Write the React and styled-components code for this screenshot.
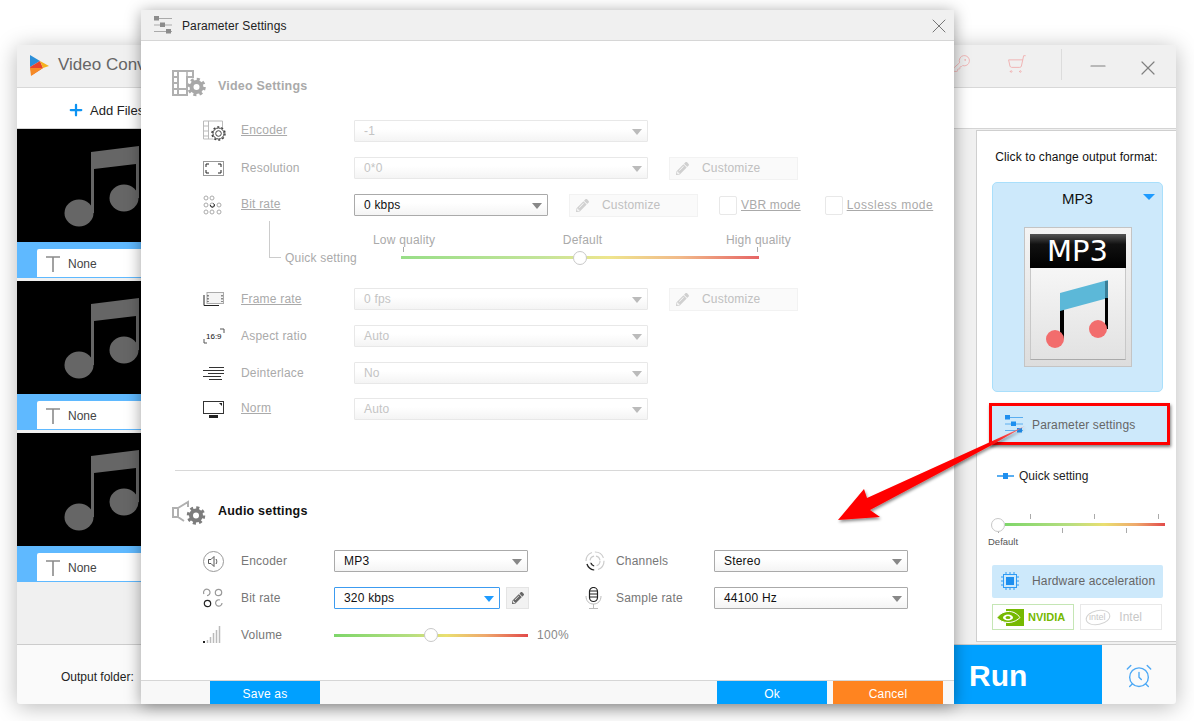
import styled, { createGlobalStyle } from "styled-components";
import { AlarmClock, KeyRound, ShoppingCart, X, Minus, Plus } from "lucide-react";
import { FaPencilAlt } from "react-icons/fa";

const GlobalStyle = createGlobalStyle`
  html, body {
    margin: 0;
    padding: 0;
    background: #fff;
  }
  * {
    box-sizing: border-box;
  }
  body {
    font-family: "Liberation Sans", Arial, sans-serif;
    font-size: 12px;
  }
`;

const Desktop = styled.div`
  position: relative;
  width: 1194px;
  height: 721px;
  overflow: hidden;
  background: #fff;
`;

const MainWindow = styled.div`
  position: absolute;
  left: 17px;
  top: 45px;
  width: 1159px;
  height: 659px;
  display: flex;
  flex-direction: column;
  border-radius: 4px;
  overflow: hidden;
  background: #f0f0f0;
`;

const MainShadow = styled.div`
  position: absolute;
  left: 17px;
  top: 45px;
  width: 1159px;
  height: 659px;
  border-radius: 4px;
  box-shadow: 0 3px 22px rgba(0, 0, 0, 0.28);
`;

const TitleBar = styled.div`
  height: 43px;
  flex: none;
  display: flex;
  align-items: center;
  padding-left: 12px;
  background: #f0f0f0;
  border-bottom: 1px solid #d8d8d8;
`;

const AppName = styled.div`
  margin: 0 0 2px 9px;
  font-size: 17px;
  color: #666;
`;

const TitleTools = styled.div`
  margin-left: auto;
  display: flex;
  align-items: center;
  color: #f0b4b4;
`;

const ToolIcon = styled.div`
  display: flex;
  margin: -5px ${(p) => p.$mr || 0}px 0 0;
  transform: ${(p) => (p.$flip ? "scaleX(-1)" : "none")};
`;

const TitleSep = styled.div`
  width: 1px;
  height: 31px;
  margin: -4px 24px 0 34px;
  background: #dcdcdc;
`;

const WinButton = styled.div`
  display: flex;
  color: #808080;
  margin: ${(p) => p.$mt || 0}px ${(p) => p.$mr || 0}px 0 0;
`;

const Toolbar = styled.div`
  height: 41px;
  flex: none;
  display: flex;
  align-items: center;
  padding: 4px 0 0 50px;
  gap: 5px;
  background: #fff;
  border-bottom: 1px solid #d4d4d4;
  font-size: 13px;
  color: #222;
`;

const Content = styled.div`
  flex: 1;
  min-height: 0;
  display: flex;
  background: #f0f0f0;
`;

const FileList = styled.div`
  flex: 1;
  display: flex;
  flex-direction: column;
`;

const FileItem = styled.div`
  width: 800px;
  margin-bottom: 3px;
`;

const Thumb = styled.div`
  height: 113px;
  padding: 17px 0 0 47px;
  background: #000;
`;

const Strip = styled.div`
  height: 36px;
  padding: 7px 0 1px 20px;
  background: #5fb9ff;
`;

const NameBox = styled.div`
  height: 28px;
  display: flex;
  align-items: center;
  gap: 8px;
  padding: 1px 0 0 9px;
  background: #fff;
  border-radius: 2px 0 0 0;
  color: #444;
`;

const SidePanel = styled.div`
  width: 200px;
  flex: none;
  margin: 1px 0 2px;
  display: flex;
  flex-direction: column;
  background: #fff;
  border: 1px solid #cfcfcf;
  border-width: 1px 0 1px 1px;
`;

const SideHint = styled.div`
  margin-top: 19px;
  text-align: center;
  color: #111;
  letter-spacing: 0.1px;
  line-height: 14px;
`;

const FormatCard = styled.div`
  position: relative;
  margin: 18px 13px 0 15px;
  height: 210px;
  display: flex;
  flex-direction: column;
  align-items: center;
  background: #cde9fb;
  border: 1px solid #a9dffb;
  border-radius: 5px;
`;

const FormatName = styled.div`
  margin-top: 7px;
  height: 18px;
  font-size: 15px;
  color: #111;
`;

const FormatCaret = styled.div`
  position: absolute;
  right: 7px;
  top: 11px;
  border: 6px solid transparent;
  border-top: 6px solid #1e9bff;
  border-bottom: 0;
`;

const DocIcon = styled.div`
  margin-top: 19px;
  width: 108px;
  height: 140px;
  padding: 6px 5px;
  background: linear-gradient(#f4f4f4, #ddd);
  border: 1px solid #c4c4c4;
`;

const DocHead = styled.div`
  height: 34px;
  display: flex;
  align-items: center;
  justify-content: center;
  background: linear-gradient(#555 0, #111 30%, #000 100%);
  color: #fff;
  font-family: "DejaVu Sans", sans-serif;
  font-size: 29px;
`;

const DocBody = styled.div`
  height: 92px;
  padding: 11px 0 0 15px;
  background: linear-gradient(#f6f6f6, #e2e2e2);
  border: 1px solid #c8c8c8;
  border-width: 0 1px 1px;
  border-bottom-color: #aaa;
`;

const ParamRow = styled.div`
  margin: 11px 6px 0 12px;
  height: 42px;
  display: flex;
  align-items: center;
  padding: 0 0 0 13px;
  gap: 9px;
  background: #cde9fb;
  border: 3px solid #f00;
  box-shadow: 1px 2px 3px rgba(0, 0, 0, 0.5);
  color: #666;
`;

const ParamText = styled.div`
  margin-top: 1px;
  letter-spacing: 0.15px;
`;

const QuickRow = styled.div`
  margin: 24px 0 0 20px;
  display: flex;
  align-items: center;
  gap: 5px;
  color: #222;
`;

const SideSlider = styled.div`
  position: relative;
  margin: 40px 11px 0 28px;
  height: 3px;
  background: linear-gradient(90deg, #7ed66a, #b6de80 40%, #eadf70 62%, #eea86c 82%, #e24a4a);
`;

const Tick = styled.div`
  position: absolute;
  left: ${(p) => p.$x}px;
  top: ${(p) => (p.$low ? 5 : -9)}px;
  width: 1px;
  height: 5px;
  background: #aaa;
`;

const Knob = styled.div`
  position: absolute;
  left: ${(p) => p.$left};
  top: 50%;
  width: 14px;
  height: 14px;
  margin: -7px 0 0 -7px;
  border-radius: 50%;
  background: #fff;
  border: 1px solid #c8c8c8;
`;

const SideDefault = styled.div`
  margin: 10px 0 0 11px;
  font-size: 9.5px;
  color: #555;
  line-height: 11px;
`;

const HwRow = styled.div`
  margin: 18px 13px 0 15px;
  height: 33px;
  display: flex;
  align-items: center;
  gap: 13px;
  padding: 0 0 1px 9px;
  background: #cde9fb;
  border-radius: 2px;
  color: #666;
  letter-spacing: 0.15px;
`;

const GpuRow = styled.div`
  margin: 6px 14px 0 15px;
  display: flex;
  gap: 6px;
`;

const GpuButton = styled.div`
  flex: 1;
  height: 26px;
  display: flex;
  align-items: center;
  gap: ${(p) => (p.$on ? 4 : 5)}px;
  padding-left: 4px;
  border: 1px solid ${(p) => (p.$on ? "#c5e6b5" : "#e8e8e8")};
  color: ${(p) => (p.$on ? "#76b900" : "#c8c8c8")};
  font-size: ${(p) => (p.$on ? 11 : 12)}px;
  font-weight: ${(p) => (p.$on ? "bold" : "normal")};
`;

const BottomBar = styled.div`
  height: 60px;
  flex: none;
  display: flex;
  align-items: stretch;
  padding-left: 44px;
  background: #fafafa;
  border-top: 1px solid #ccc;
`;

const OutputLabel = styled.div`
  margin-top: 25px;
  color: #222;
`;

const RunButton = styled.div`
  margin-left: auto;
  width: 200px;
  padding: 2px 0 0 67px;
  display: flex;
  align-items: center;
  background: #00a0ff;
  color: #fff;
  font-size: 30px;
  font-weight: bold;
`;

const AlarmSlot = styled.div`
  width: 74px;
  padding-top: 2px;
  display: flex;
  align-items: center;
  justify-content: center;
  color: #4ea9f5;
`;

const Dialog = styled.div`
  position: absolute;
  left: 141px;
  top: 10px;
  width: 813px;
  height: 694px;
  display: flex;
  flex-direction: column;
  background: #fff;
  border-radius: 3px;
  box-shadow: 0 2px 16px rgba(0, 0, 0, 0.38);
`;

const DialogTitle = styled.div`
  height: 31px;
  flex: none;
  display: flex;
  align-items: center;
  padding: 0 3px 0 13px;
  gap: 10px;
  background: #f0f0f0;
  border-bottom: 1px solid #d6d6d6;
  color: #222;
  letter-spacing: 0.1px;
`;

const DialogHeading = styled.div`
  margin-top: 2px;
`;

const DialogClose = styled.div`
  margin: 1px 0 0 auto;
  display: flex;
  color: #777;
`;

const DialogBody = styled.div`
  flex: 1;
  min-height: 0;
  padding-top: 29px;
`;

const SectionHead = styled.div`
  height: 26px;
  display: flex;
  align-items: flex-start;
  gap: 11px;
  padding-left: 31px;
  font-weight: bold;
  font-size: 12.5px;
  line-height: 14px;
  letter-spacing: 0.2px;
  color: ${(p) => (p.$off ? "#aaa" : "#111")};
`;

const SectionText = styled.div`
  margin-top: ${(p) => p.$mt}px;
`;

const Rows = styled.div`
  margin-top: 24px;
  padding-left: 62px;
  display: flex;
  flex-direction: column;
  gap: 15px;
`;

const Row = styled.div`
  height: 22px;
  display: flex;
  align-items: center;
  margin-top: ${(p) => p.$mt || 0}px;
`;

const IconSlot = styled.div`
  width: ${(p) => p.$w || 38}px;
  flex: none;
  display: flex;
`;

const Label = styled.div`
  width: ${(p) => p.$w || 113}px;
  flex: none;
  margin-bottom: ${(p) => (p.$up ? 2 : 0)}px;
  color: ${(p) => (p.$off ? "#aaa" : "#777")};
  text-decoration: ${(p) => (p.$link ? "underline" : "none")};
  letter-spacing: 0.2px;
`;

const Select = styled.div`
  position: relative;
  width: ${(p) => p.$w}px;
  height: 22px;
  flex: none;
  display: flex;
  align-items: center;
  padding-left: 9px;
  border-radius: 1px;
  letter-spacing: 0.2px;
  color: ${(p) => (p.$off ? "#c4c4c4" : "#111")};
  background: ${(p) => (p.$focus ? "#fff" : "linear-gradient(#fff 40%, #f4f4f4)")};
  border: 1px solid ${(p) => (p.$focus ? "#3c9bf0" : p.$off ? "#e8e8e8" : "#aaa")};

  &::after {
    content: "";
    position: absolute;
    right: 5px;
    top: 8px;
    border: 5.5px solid transparent;
    border-top: 6px solid ${(p) => (p.$focus ? "#1e9bff" : p.$off ? "#bbb" : "#888")};
    border-bottom: 0;
  }
`;

const Customize = styled.div`
  width: 129px;
  height: 23px;
  flex: none;
  margin-left: 21px;
  display: flex;
  align-items: center;
  gap: 13px;
  padding-left: 6px;
  background: #fafafa;
  border: 1px solid #f2f2f2;
  color: #c0c0c0;
  letter-spacing: 0.2px;
`;

const Check = styled.div`
  width: 18px;
  height: 19px;
  flex: none;
  margin: 0 4px 0 ${(p) => p.$ml}px;
  border: 1px solid #e8e8e8;
  border-radius: 2px;
`;

const CheckLabel = styled.div`
  color: #aaa;
  text-decoration: underline;
  letter-spacing: ${(p) => p.$ls || 0.2}px;
`;

const QuickBlock = styled.div`
  height: 57px;
  margin-top: -15px;
  display: flex;
  padding-left: 66px;
`;

const Bracket = styled.div`
  width: 12px;
  height: 37px;
  margin: 5px 4px 0 0;
  border: solid #ccc;
  border-width: 0 0 1px 1px;
`;

const QuickLabel = styled.div`
  width: 88px;
  margin-top: 35px;
  color: #aaa;
  line-height: 14px;
  letter-spacing: 0.2px;
`;

const QuickSlider = styled.div`
  width: 418px;
  padding-top: 17px;
`;

const QuickMarks = styled.div`
  display: flex;
  justify-content: space-between;
  color: #aaa;
  line-height: 14px;
  letter-spacing: 0.2px;
`;

const MiddleMark = styled.span`
  padding-left: 4px;
`;

const Track = styled.div`
  position: relative;
  height: 3px;
  width: ${(p) => p.$w}px;
  margin: ${(p) => p.$m || 0};
  flex: none;
  background: linear-gradient(
    90deg,
    rgba(126, 214, 106, ${(p) => (p.$faded ? 0.8 : 1)}),
    rgba(182, 222, 128, ${(p) => (p.$faded ? 0.8 : 1)}) 40%,
    rgba(234, 223, 112, ${(p) => (p.$faded ? 0.8 : 1)}) 58%,
    rgba(238, 168, 108, ${(p) => (p.$faded ? 0.8 : 1)}) 78%,
    rgba(226, 74, 74, ${(p) => (p.$faded ? 0.85 : 1)})
  );
`;

const Divider = styled.div`
  height: 1px;
  margin: 50px 34px 29px;
  background: #d8d8d8;
`;

const AudioGrid = styled.div`
  margin-top: 24px;
  padding-left: 62px;
  display: grid;
  grid-template-columns: 382px 1fr;
`;

const AudioCol = styled.div`
  display: flex;
  flex-direction: column;
  gap: 15px;
`;

const PencilButton = styled.div`
  width: 23px;
  height: 22px;
  flex: none;
  margin-left: 6px;
  display: flex;
  align-items: center;
  justify-content: center;
  background: #f2f2f2;
  border: 1px solid #e4e4e4;
  color: #666;
`;

const FadedPencil = styled(FaPencilAlt)`
  color: #d0d0d0;
`;

const VolumeValue = styled.div`
  margin-left: 9px;
  color: #888;
  letter-spacing: 0.3px;
`;

const Footer = styled.div`
  height: 24px;
  flex: none;
  display: flex;
  padding: 0 11px 0 69px;
  gap: 6px;
  background: #f8f8f8;
  border-top: 1px solid #d6d6d6;
`;

const FootButton = styled.div`
  width: 110px;
  padding-top: 2px;
  display: flex;
  align-items: center;
  justify-content: center;
  margin-left: ${(p) => p.$ml || 0};
  background: ${(p) => p.$bg};
  color: #fff;
  letter-spacing: 0.2px;
`;

const ArrowLayer = styled.svg`
  position: absolute;
  left: 0;
  top: 0;
  pointer-events: none;
`;

function Logo() {
  return (
    <svg width="20" height="22" viewBox="0 0 20 22">
      <polygon points="1,0 11,6 1,12" fill="#2b8fd8" />
      <polygon points="1,12 11,6 14,13 3,20" fill="#e8432d" />
      <polygon points="11,6 20,11 14,13" fill="#f5b21e" />
      <polygon points="1,13 14,13 2,21" fill="#f58a26" />
    </svg>
  );
}

function MusicNote() {
  return (
    <svg width="76" height="82" viewBox="0 0 76 82" fill="#666">
      <ellipse cx="15" cy="67" rx="14.5" ry="13.5" />
      <ellipse cx="60" cy="52" rx="14.5" ry="13.5" />
      <polygon points="27,6 75,0 75,52 72,52 72,18 30,23 30,67 27,67" />
    </svg>
  );
}

function DocNote() {
  return (
    <svg width="64" height="70" viewBox="0 0 64 70">
      <rect x="14" y="30" width="4" height="30" />
      <polygon points="14,14 62,1 62,19 14,32" fill="#5cb8d8" />
      <rect x="59" y="2" width="3" height="17" fill="#3a7f98" />
      <rect x="59" y="19" width="3" height="31" />
      <circle cx="9" cy="60" r="9" fill="#f26d6d" />
      <circle cx="52" cy="50" r="9" fill="#f26d6d" />
    </svg>
  );
}

function SlidersIcon({ color = "#1e8fef", line = "#5aaef0" }) {
  return (
    <svg width="18" height="18" viewBox="0 0 18 18">
      <path d="M0 2.5h18M0 9h18M0 15.5h18" stroke={line} strokeWidth="1" />
      <rect x="0" y="0" width="5" height="4.5" fill={color} />
      <rect x="6" y="6.5" width="5" height="4.5" fill={color} />
      <rect x="12" y="13" width="5" height="4.5" fill={color} />
    </svg>
  );
}

function QuickIcon() {
  return (
    <svg width="17" height="6" viewBox="0 0 17 6">
      <rect x="0" y="2" width="17" height="2" fill="#5aaef0" />
      <rect x="6" y="0" width="5" height="6" fill="#1e8fef" />
    </svg>
  );
}

function ChipIcon() {
  return (
    <svg width="18" height="18" viewBox="0 0 18 18" stroke="#2f9bf5" fill="none">
      <rect x="2.5" y="2.5" width="13" height="13" />
      <rect x="5" y="5" width="8" height="8" fill="#1e8fef" stroke="none" />
      <path d="M5 0v2M9 0v2M13 0v2M5 16v2M9 16v2M13 16v2M0 5h2M0 9h2M0 13h2M16 5h2M16 9h2M16 13h2" />
    </svg>
  );
}

function NvidiaIcon() {
  return (
    <svg width="27" height="17" viewBox="0 0 27 17">
      <rect x="9" y="0" width="18" height="17" fill="#76b900" />
      <path d="M0 8.5C4 3 11 1 17 3.5c3 1.500 5 3.500 6 5-2 2-6 5-12 5-5 0-9-2-11-5z" fill="#76b900" stroke="#fff" strokeWidth="1" />
      <ellipse cx="11" cy="8.5" rx="5" ry="3" fill="#fff" />
      <ellipse cx="11" cy="8.5" rx="2.5" ry="1.5" fill="#76b900" />
    </svg>
  );
}

function IntelIcon() {
  return (
    <svg width="26" height="17" viewBox="0 0 26 17">
      <ellipse cx="13" cy="8.5" rx="12" ry="7" fill="none" stroke="#d4d4d4" transform="rotate(-12 13 8.5)" />
      <text x="4" y="11" fontSize="9" fill="#c8c8c8" fontFamily="Liberation Sans">intel</text>
    </svg>
  );
}

function Gear({ cx, cy, r, color, sw = 1, toothW = sw, teeth, ringR = r * 1.5 }) {
  const dash = (2 * Math.PI * ringR) / (teeth * 2);
  return (
    <g fill="none" stroke={color}>
      <circle cx={cx} cy={cy} r={r} strokeWidth={sw} />
      <circle cx={cx} cy={cy} r={ringR} strokeWidth={toothW} strokeDasharray={`${dash} ${dash}`} />
    </g>
  );
}

function FilmHead() {
  return (
    <svg width="35" height="27" viewBox="0 0 35 27">
      <path d="M1 1h20v6h-6v18H1zM6 1v24M1 7h5M1 13h5M1 19h5M6 19h8" fill="none" stroke="#b0b0b0" strokeWidth="2" />
      <rect x="15" y="1" width="6" height="6" fill="none" stroke="#b0b0b0" strokeWidth="1.5" />
      <Gear cx={24.5} cy={17} r={5} color="#a8a8a8" sw={4} toothW={3.5} teeth={8} ringR={7.5} />
    </svg>
  );
}

function SpeakerHead() {
  return (
    <svg width="35" height="26" viewBox="0 0 35 26">
      <path d="M1 8h5v9H1zM6 8l10-6v5M6 17l6 4" fill="none" stroke="#b0b0b0" strokeWidth="2" />
      <Gear cx={24} cy={15.5} r={5} color="#7c7c7c" sw={4} toothW={3.5} teeth={8} ringR={7.5} />
    </svg>
  );
}

function EncoderIcon() {
  return (
    <svg width="24" height="22" viewBox="0 0 24 22">
      <path d="M.5 1h19v18H.5zM5.500 1v18M.5 6h5M.5 11h5M.5 16h5" fill="none" stroke="#bbb" />
      <circle cx="15.500" cy="13.500" r="7.500" fill="#fff" />
      <Gear cx={15.5} cy={13.5} r={2.8} color="#444" sw={1} teeth={10} ringR={6.5} toothW={1.5} />
      <circle cx="15.500" cy="13.500" r="5.500" fill="none" stroke="#444" strokeWidth="1" />
    </svg>
  );
}

function ResolutionIcon() {
  return (
    <svg width="21" height="15" viewBox="0 0 21 15" fill="none">
      <rect x=".5" y=".5" width="20" height="14" stroke="#999" />
      <path d="M3 6V3h3M15 3h3v3M3 9v3h3M15 12h3V9" stroke="#222" />
    </svg>
  );
}

function DotsIcon() {
  const dots = [[3, 3], [9, 3], [3, 10], [9, 10], [16, 10], [3, 17], [9, 17], [16, 17]];
  return (
    <svg width="21" height="21" viewBox="0 0 21 21" fill="none" stroke="#aaa">
      {dots.map(([x, y]) => (
        <circle key={`${x}-${y}`} cx={x} cy={y} r="2" />
      ))}
      <path d="M7.500 10a2 2 0 1 0 3-1.500" stroke="#222" />
    </svg>
  );
}

function FrameIcon() {
  return (
    <svg width="21" height="15" viewBox="0 0 21 15" fill="none">
      <rect x="4" y=".5" width="16.500" height="11" stroke="#aaa" fill="#f4f4f4" />
      <path d="M5 3v7M19 3v7" stroke="#222" strokeDasharray="1.500 1.500" />
      <path d="M1 3v10.500h15" stroke="#222" />
    </svg>
  );
}

function AspectIcon() {
  return (
    <svg width="22" height="16" viewBox="0 0 22 16" fill="none">
      <path d="M17 1h4v4M1 11v4h3" stroke="#555" />
      <text x="3" y="11" fontSize="8" fill="#111" fontFamily="Liberation Sans">16:9</text>
    </svg>
  );
}

function LinesIcon() {
  return (
    <svg width="21" height="13" viewBox="0 0 21 13">
      <path d="M6 .5h15M0 3.500h21M5 6.500h16M0 9.500h18M6 12.500h13" stroke="#333" />
    </svg>
  );
}

function MonitorIcon() {
  return (
    <svg width="21" height="17" viewBox="0 0 21 17">
      <rect x=".5" y=".5" width="20" height="12" fill="none" stroke="#333" />
      <polygon points="16,2 19,2 19,5" fill="#222" />
      <rect x="6" y="14" width="9" height="3" fill="#222" />
    </svg>
  );
}

function SpeakerIcon() {
  return (
    <svg width="21" height="21" viewBox="0 0 21 21" fill="none" stroke="#555">
      <circle cx="10.500" cy="10.500" r="10" stroke="#999" />
      <path d="M5.500 8.500h2.500l3-3v10l-3-3H5.500zM13 8c1 1.500 1 3.500 0 5" />
    </svg>
  );
}

function BitDotsIcon() {
  return (
    <svg width="20" height="20" viewBox="0 0 20 20" fill="none" strokeWidth="1.200">
      <path d="M1 6a3.200 3.200 0 1 1 3 1.600" stroke="#999" />
      <circle cx="15.500" cy="4.500" r="3.200" stroke="#999" />
      <circle cx="4.500" cy="15.500" r="3.200" stroke="#222" />
      <path d="M19 15a3.200 3.200 0 1 1-2-3" stroke="#999" />
    </svg>
  );
}

function VolumeIcon() {
  return (
    <svg width="19" height="18" viewBox="0 0 19 18">
      <rect x="0" y="15" width="2" height="2" fill="#222" />
      <path d="M4.500 17v-3M7.500 17v-6M10.500 17V7M13.500 17V4M16.500 17V0" stroke="#bbb" strokeWidth="1.500" />
    </svg>
  );
}

function ChannelsIcon() {
  return (
    <svg width="20" height="20" viewBox="0 0 20 20" fill="none" stroke="#ccc" strokeWidth="1.200">
      <circle cx="10" cy="10" r="9" strokeDasharray="11 3" />
      <circle cx="10" cy="10" r="5" strokeDasharray="6 2" />
      <path d="M2 13a9 9 0 0 0 7 6M6 12a5 5 0 0 0 3 3" stroke="#222" />
    </svg>
  );
}

function MicIcon() {
  return (
    <svg width="17" height="22" viewBox="0 0 17 22" fill="none">
      <rect x="4.500" y=".5" width="8" height="14" rx="4" stroke="#222" strokeWidth="1.200" />
      <path d="M5 4h7M5 7h7M5 10h7" stroke="#222" />
      <path d="M1 9c0 5 3 8 7.500 8S16 14 16 9M8.500 17v4M4 21.500h9" stroke="#bbb" />
    </svg>
  );
}

function TIcon() {
  return (
    <svg width="14" height="16" viewBox="0 0 14 16">
      <path d="M0 1h14M7 1v15" stroke="#8a8a8a" strokeWidth="1.600" />
    </svg>
  );
}

function FileRow() {
  return (
    <FileItem>
      <Thumb>
        <MusicNote />
      </Thumb>
      <Strip>
        <NameBox>
          <TIcon />
          None
        </NameBox>
      </Strip>
    </FileItem>
  );
}

function App() {
  return (
    <Desktop>
      <GlobalStyle />
      <MainShadow />
      <MainWindow>
        <TitleBar>
          <Logo />
          <AppName>Video Converter</AppName>
          <TitleTools>
            <ToolIcon $mr={36}>
              <KeyRound size={19} strokeWidth={1.2} />
            </ToolIcon>
            <ToolIcon $flip>
              <ShoppingCart size={20} strokeWidth={1.2} />
            </ToolIcon>
            <TitleSep />
            <WinButton $mr={26}>
              <Minus size={24} strokeWidth={1.2} />
            </WinButton>
            <WinButton $mr={16} $mt={4}>
              <X size={24} strokeWidth={1.2} />
            </WinButton>
          </TitleTools>
        </TitleBar>
        <Toolbar>
          <Plus size={18} color="#0d93f2" strokeWidth={3} />
          Add Files
        </Toolbar>
        <Content>
          <FileList>
            <FileRow />
            <FileRow />
            <FileRow />
          </FileList>
          <SidePanel>
            <SideHint>Click to change output format:</SideHint>
            <FormatCard>
              <FormatName>MP3</FormatName>
              <FormatCaret />
              <DocIcon>
                <DocHead>MP3</DocHead>
                <DocBody>
                  <DocNote />
                </DocBody>
              </DocIcon>
            </FormatCard>
            <ParamRow>
              <SlidersIcon />
              <ParamText>Parameter settings</ParamText>
            </ParamRow>
            <QuickRow>
              <QuickIcon />
              Quick setting
            </QuickRow>
            <SideSlider>
              <Tick $x={25} />
              <Tick $x={89} />
              <Tick $x={153} />
              <Tick $x={-7} $low />
              <Tick $x={57} $low />
              <Tick $x={121} $low />
              <Knob $left="-7px" />
            </SideSlider>
            <SideDefault>Default</SideDefault>
            <HwRow>
              <ChipIcon />
              Hardware acceleration
            </HwRow>
            <GpuRow>
              <GpuButton $on>
                <NvidiaIcon />
                NVIDIA
              </GpuButton>
              <GpuButton>
                <IntelIcon />
                &nbsp;Intel
              </GpuButton>
            </GpuRow>
          </SidePanel>
        </Content>
        <BottomBar>
          <OutputLabel>Output folder:</OutputLabel>
          <RunButton>Run</RunButton>
          <AlarmSlot>
            <AlarmClock size={28} strokeWidth={1.2} />
          </AlarmSlot>
        </BottomBar>
      </MainWindow>

      <Dialog>
        <DialogTitle>
          <SlidersIcon color="#8c8c8c" line="#aaa" />
          <DialogHeading>Parameter Settings</DialogHeading>
          <DialogClose>
            <X size={24} strokeWidth={1} />
          </DialogClose>
        </DialogTitle>
        <DialogBody>
          <SectionHead $off>
            <FilmHead />
            <SectionText $mt={9}>Video Settings</SectionText>
          </SectionHead>
          <Rows>
            <Row>
              <IconSlot><EncoderIcon /></IconSlot>
              <Label $off $link $up>Encoder</Label>
              <Select $off $w={294}>-1</Select>
            </Row>
            <Row>
              <IconSlot><ResolutionIcon /></IconSlot>
              <Label $off>Resolution</Label>
              <Select $off $w={294}>0*0</Select>
              <Customize>
                <FadedPencil size={13} />
                Customize
              </Customize>
            </Row>
            <Row>
              <IconSlot><DotsIcon /></IconSlot>
              <Label $off $link $up>Bit rate</Label>
              <Select $w={194}>0 kbps</Select>
              <Customize>
                <FadedPencil size={13} />
                Customize
              </Customize>
              <Check $ml={21} />
              <CheckLabel>VBR mode</CheckLabel>
              <Check $ml={24} />
              <CheckLabel $ls={0.5}>Lossless mode</CheckLabel>
            </Row>
            <QuickBlock>
              <Bracket />
              <QuickLabel>Quick setting</QuickLabel>
              <QuickSlider>
                <QuickMarks>
                  <span>Low quality</span>
                  <MiddleMark>Default</MiddleMark>
                  <span>High quality</span>
                </QuickMarks>
                <Track $faded $w={358} $m="9px 0 0 28px">
                  <Tick $x={2} />
                  <Tick $x={356} />
                  <Knob $left="50%" />
                </Track>
              </QuickSlider>
            </QuickBlock>
            <Row>
              <IconSlot><FrameIcon /></IconSlot>
              <Label $off $link>Frame rate</Label>
              <Select $off $w={294}>0 fps</Select>
              <Customize>
                <FadedPencil size={13} />
                Customize
              </Customize>
            </Row>
            <Row>
              <IconSlot><AspectIcon /></IconSlot>
              <Label $off>Aspect ratio</Label>
              <Select $off $w={294}>Auto</Select>
            </Row>
            <Row>
              <IconSlot><LinesIcon /></IconSlot>
              <Label $off>Deinterlace</Label>
              <Select $off $w={294}>No</Select>
            </Row>
            <Row $mt={-1}>
              <IconSlot><MonitorIcon /></IconSlot>
              <Label $off $link $up>Norm</Label>
              <Select $off $w={294}>Auto</Select>
            </Row>
          </Rows>
          <Divider />
          <SectionHead>
            <SpeakerHead />
            <SectionText $mt={4}>Audio settings</SectionText>
          </SectionHead>
          <AudioGrid>
            <AudioCol>
              <Row>
                <IconSlot><SpeakerIcon /></IconSlot>
                <Label $w={93}>Encoder</Label>
                <Select $w={194}>MP3</Select>
              </Row>
              <Row>
                <IconSlot><BitDotsIcon /></IconSlot>
                <Label $w={93}>Bit rate</Label>
                <Select $focus $w={166}>320 kbps</Select>
                <PencilButton>
                  <FaPencilAlt size={12} />
                </PencilButton>
              </Row>
              <Row>
                <IconSlot><VolumeIcon /></IconSlot>
                <Label $w={93}>Volume</Label>
                <Track $w={194}>
                  <Knob $left="50%" />
                </Track>
                <VolumeValue>100%</VolumeValue>
              </Row>
            </AudioCol>
            <AudioCol>
              <Row>
                <IconSlot $w={31}><ChannelsIcon /></IconSlot>
                <Label $w={98}>Channels</Label>
                <Select $w={194}>Stereo</Select>
              </Row>
              <Row>
                <IconSlot $w={31}><MicIcon /></IconSlot>
                <Label $w={98}>Sample rate</Label>
                <Select $w={194}>44100 Hz</Select>
              </Row>
            </AudioCol>
          </AudioGrid>
        </DialogBody>
        <Footer>
          <FootButton $bg="#00a0ff">Save as</FootButton>
          <FootButton $bg="#00a0ff" $ml="auto">Ok</FootButton>
          <FootButton $bg="#ff8420">Cancel</FootButton>
        </Footer>
      </Dialog>

      <ArrowLayer width="1194" height="721" viewBox="0 0 1194 721">
        <defs>
          <linearGradient id="arrowFade" x1="988" y1="443" x2="1025" y2="426" gradientUnits="userSpaceOnUse">
            <stop offset="0" stopColor="#f00" />
            <stop offset="1" stopColor="#e88" />
          </linearGradient>
          <filter id="arrowShadow" x="-10%" y="-10%" width="125%" height="130%">
            <feDropShadow dx="1" dy="2" stdDeviation="1.500" floodColor="#000" floodOpacity="0.45" />
          </filter>
        </defs>
        <polygon
          points="838,520 864,489 867,498 988,443 1025,426 990,446 870,510 880,517"
          fill="url(#arrowFade)"
          filter="url(#arrowShadow)"
        />
      </ArrowLayer>
    </Desktop>
  );
}

export default App;
